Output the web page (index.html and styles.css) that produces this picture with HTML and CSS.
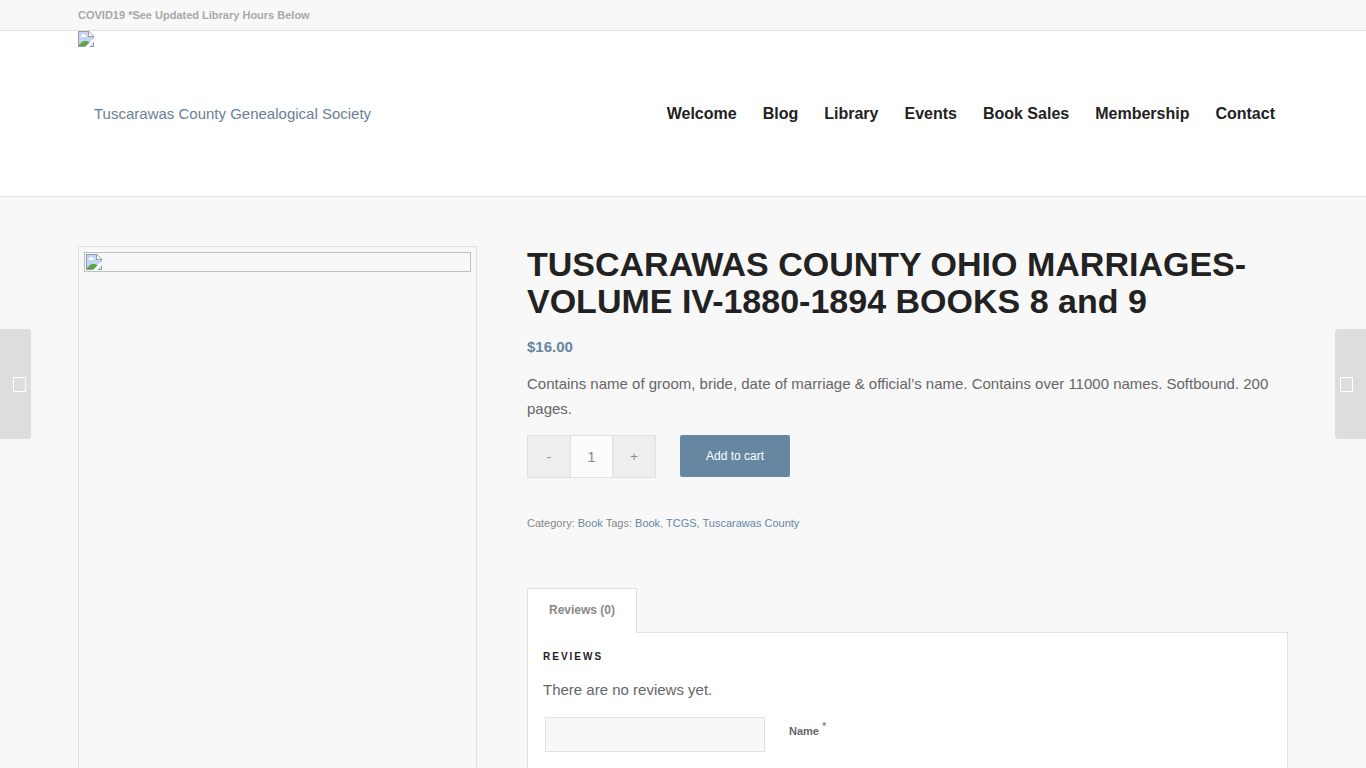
FILE: index.html
```html
<!DOCTYPE html>
<html lang="en">
<head>
<meta charset="utf-8">
<meta name="viewport" content="width=device-width, initial-scale=1">
<title>Tuscarawas County Ohio Marriages - Tuscarawas County Genealogical Society</title>
<link rel="stylesheet" href="styles.css">
</head>
<body>
<svg class="sprite" aria-hidden="true">
  <symbol id="broken" viewBox="0 0 16 16">
    <path d="M0 0h11l5 5v11H0z" fill="#9a9da3"/>
    <path d="M1 1h9v5h5v9H1z" fill="#c3d5f5"/>
    <path d="M11 1l4 4h-4z" fill="#fff"/>
    <path d="M3 6V4h1V3h2v1h2v2z" fill="#fff"/>
    <path d="M1 15v-1l3-3 2-1h3l2 1 1 1-3 3z" fill="#5aa545"/>
    <path d="M16 7v4l-5 5H7z" fill="#fff"/>
  </symbol>
</svg>
<div class="topbar"><div class="container">COVID19 *See Updated Library Hours Below</div></div>
<header class="header">
  <div class="container header-row">
    <a class="logo" href="#"><svg class="broken" aria-hidden="true"><use href="#broken"/></svg><span>Tuscarawas County Genealogical Society</span></a>
    <nav class="nav">
      <a href="#">Welcome</a><a href="#">Blog</a><a href="#">Library</a><a href="#">Events</a><a href="#">Book Sales</a><a href="#">Membership</a><a href="#">Contact</a>
    </nav>
  </div>
</header>
<main class="container product">
  <div class="gallery"><a class="photo" href="#" aria-label="Product image"><svg class="broken" aria-hidden="true"><use href="#broken"/></svg></a></div>
  <div class="summary">
    <h1>TUSCARAWAS COUNTY OHIO MARRIAGES-VOLUME IV-1880-1894 BOOKS 8 and 9</h1>
    <p class="price">$16.00</p>
    <p class="description">Contains name of groom, bride, date of marriage &amp; official’s name. Contains over 11000 names. Softbound. 200 pages.</p>
    <form class="cart">
      <div class="quantity">
        <button type="button" aria-label="Decrease quantity">-</button>
        <input type="text" value="1" aria-label="Quantity">
        <button type="button" aria-label="Increase quantity">+</button>
      </div>
      <button class="add" type="button">Add to cart</button>
    </form>
    <p class="meta">Category: <a href="#">Book</a> Tags: <a href="#">Book</a>, <a href="#">TCGS</a>, <a href="#">Tuscarawas County</a></p>
    <div class="tabs">
      <button class="tab" type="button">Reviews (0)</button>
      <section class="panel">
        <h2>REVIEWS</h2>
        <p>There are no reviews yet.</p>
        <div class="field">
          <input type="text" id="author">
          <label for="author">Name <sup>*</sup></label>
        </div>
      </section>
    </div>
  </div>
</main>
<a class="pager prev" href="#" aria-label="Previous product"><span class="glyph"></span></a>
<a class="pager next" href="#" aria-label="Next product"><span class="glyph"></span></a>
</body>
</html>
```
FILE: styles.css
```css
* { box-sizing: border-box; }
body {
  margin: 0;
  min-height: 100vh;
  display: flex;
  flex-direction: column;
  background: #f8f8f8;
  color: #666;
  font: 15px/25px "Liberation Sans", Arial, sans-serif;
}
h1, h2, p { margin: 0; }
a { color: #6786a1; text-decoration: none; }
button, input { font-family: inherit; margin: 0; }
.sprite { position: absolute; width: 0; height: 0; }
.broken { display: block; flex: none; width: 16px; height: 16px; }
.container { width: 100%; max-width: 1310px; margin: 0 auto; padding: 0 50px; }
@media (min-width: 1310px) { .container { max-width: 1210px; padding: 0; } }

.topbar {
  border-bottom: 1px solid #e1e1e1;
  color: #a8a8a8;
  font-size: 11px;
  font-weight: bold;
  line-height: 30px;
}
.header { background: #fff; border-bottom: 1px solid #e1e1e1; }
.header-row { display: flex; justify-content: space-between; }
.logo { display: flex; line-height: 165px; color: #6b7f94; }
.nav { display: flex; gap: 26px; padding-right: 13px; line-height: 165px; }
.nav a { color: #222; font-size: 16px; font-weight: bold; }

.product {
  flex: 1;
  display: grid;
  grid-template-columns: 399fr 761fr;
  gap: 50px;
}
.gallery {
  margin-top: 49px;
  padding: 5px;
  border: 1px solid #e1e1e1;
  border-bottom: 0;
  border-radius: 2px 2px 0 0;
}
.photo { display: block; padding: 1px; border: 1px solid #c0c0c0; }
.summary { padding-top: 49px; }
h1 { color: #222; font-size: 34px; line-height: 37px; }
.price { margin-top: 14px; color: #6786a1; font-weight: bold; }
.description { margin-top: 12px; }
.cart { display: flex; gap: 24px; margin-top: 14px; }
.quantity { display: flex; border: 1px solid #e1e1e1; }
.quantity button {
  width: 42px;
  height: 41px;
  padding: 0;
  border: 0;
  background: #eee;
  color: #888;
  font-size: 13px;
}
.quantity input {
  width: 43px;
  padding: 0;
  border: 1px solid #e1e1e1;
  border-width: 0 1px;
  background: #fcfcfc;
  color: #888;
  font-size: 15px;
  text-align: center;
}
.add {
  width: 110px;
  height: 42px;
  padding: 0;
  border: 0;
  border-radius: 2px;
  background: #6786a1;
  color: #fff;
  font-size: 12px;
}
.meta { margin-top: 33px; color: #888; font-size: 11px; }
.tabs { margin-top: 52px; }
.tab {
  position: relative;
  z-index: 1;
  display: block;
  width: 110px;
  height: 45px;
  margin-bottom: -1px;
  padding: 0 0 2px;
  border: 1px solid #e1e1e1;
  border-bottom: 0;
  background: #fff;
  color: #888;
  font-size: 12px;
  font-weight: bold;
}
.panel { padding: 16px 16px 16px 15px; border: 1px solid #e1e1e1; border-bottom: 0; background: #fff; }
.panel h2 { color: #222; font-size: 10px; line-height: 16px; letter-spacing: 2px; }
.panel p { margin-top: 12px; }
.field { display: flex; gap: 24px; margin: 15px 0 0 2px; }
.field input { width: 220px; height: 35px; padding: 8px; border: 1px solid #e1e1e1; background: #f8f8f8; }
.field label { padding-top: 2px; font-size: 11px; font-weight: bold; }
.field sup { font-size: 11px; line-height: 0; font-weight: normal; }

.pager {
  position: fixed;
  top: calc(50% - 55px);
  display: flex;
  align-items: center;
  width: 31px;
  height: 110px;
  padding: 0 5px;
  background: #ddd;
}
.prev { left: 0; justify-content: flex-end; border-radius: 0 3px 3px 0; }
.next { right: 0; border-radius: 3px 0 0 3px; }
.glyph { width: 13px; height: 15px; border: 1px solid #fff; }
```
